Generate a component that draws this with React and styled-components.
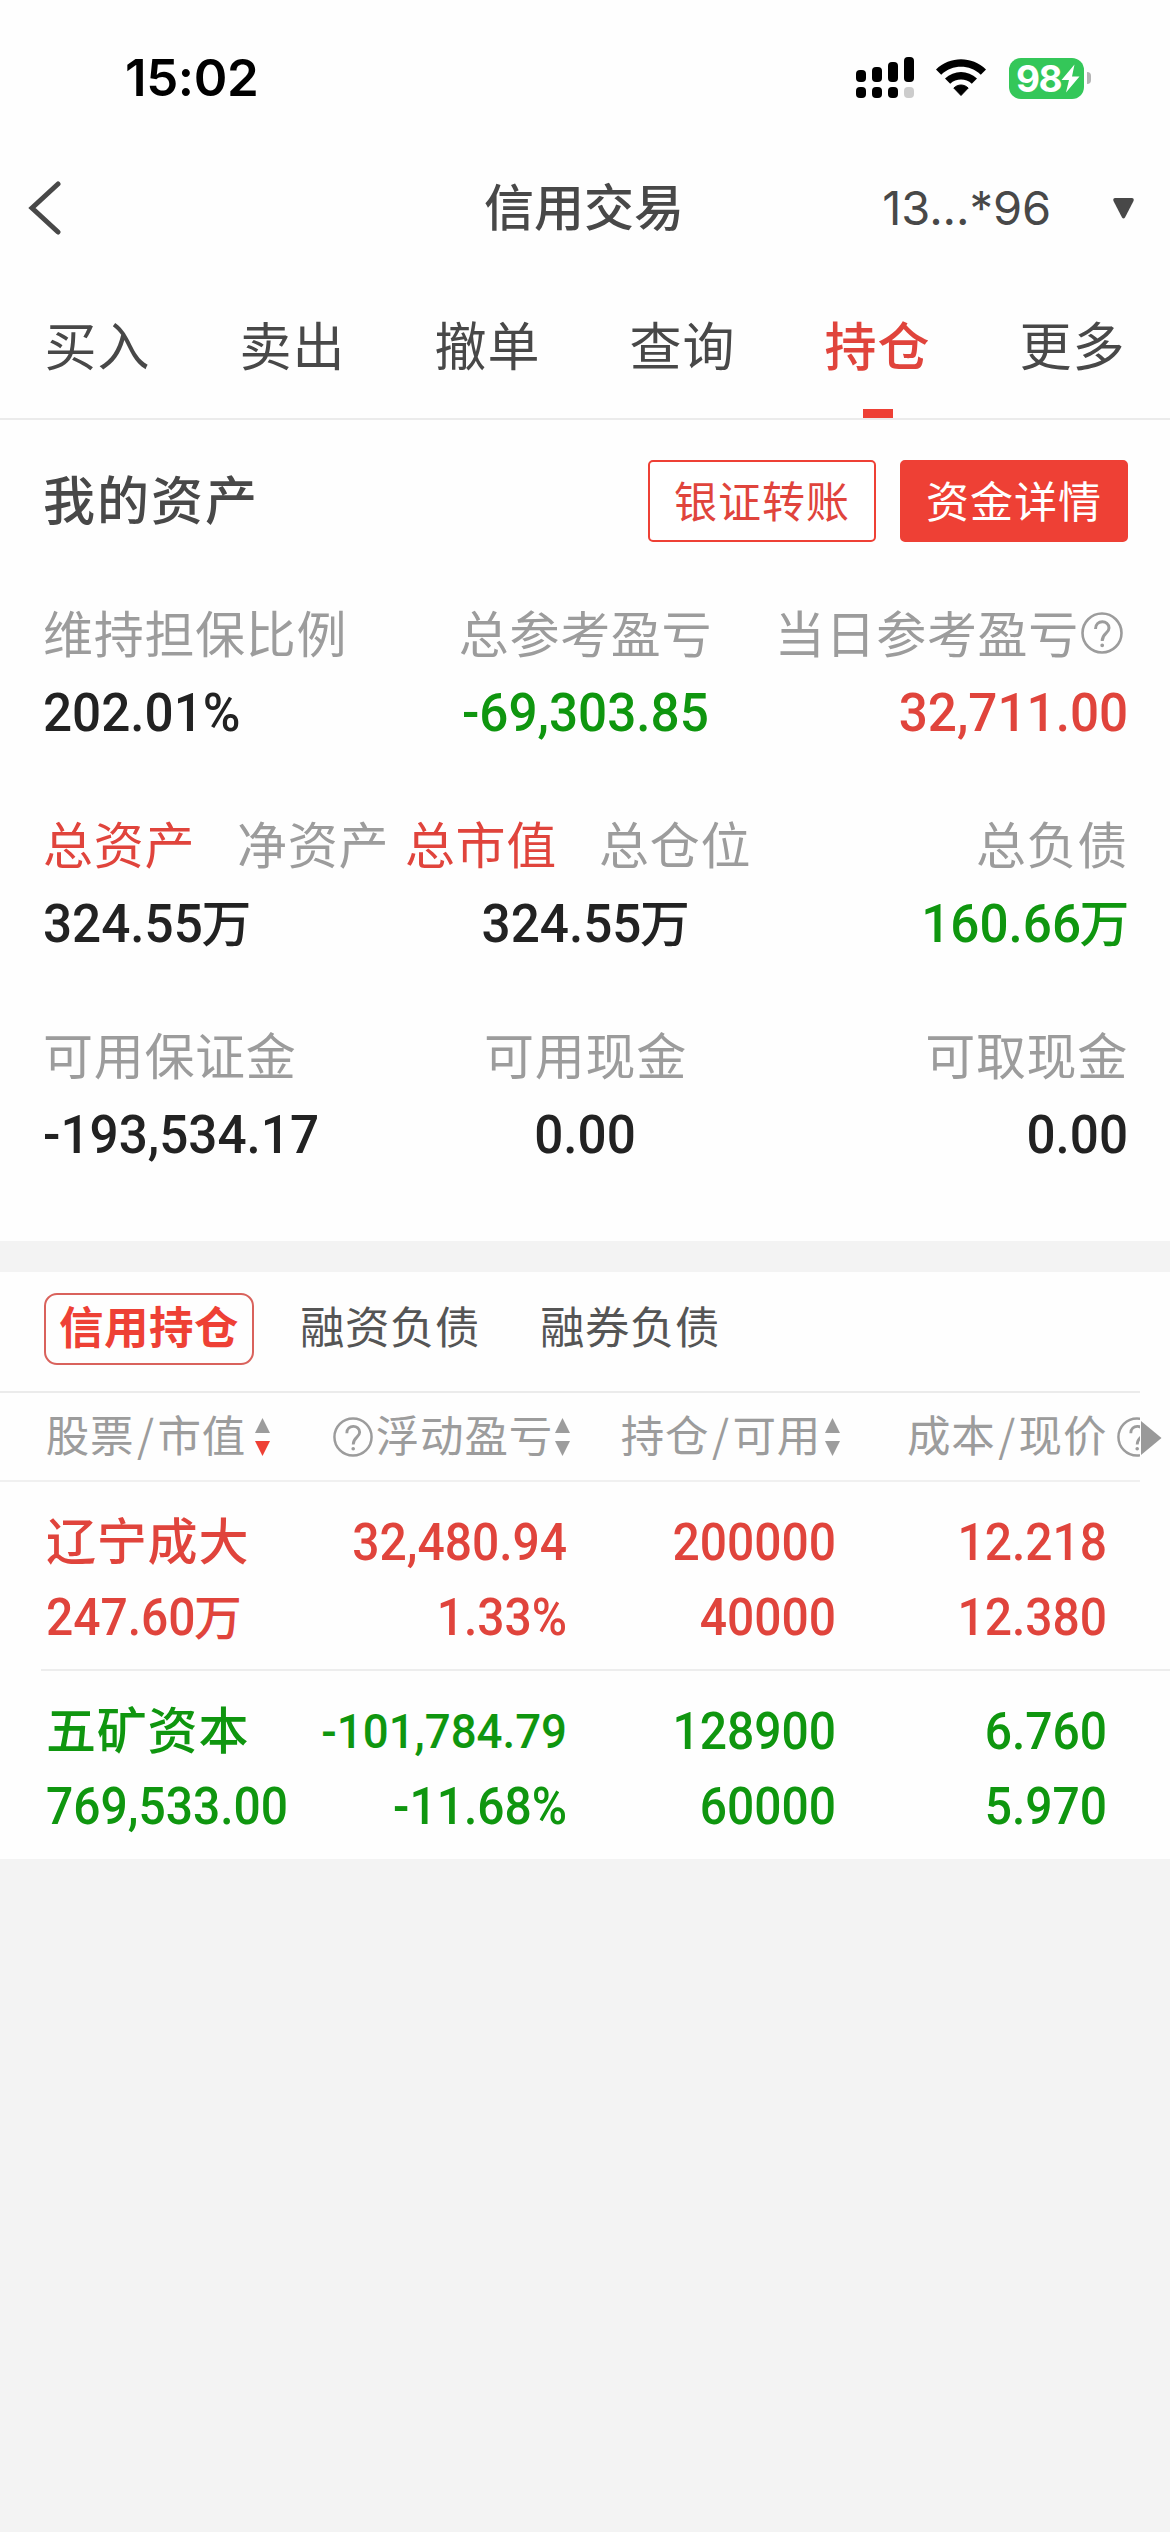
import React from "react";
import styled, { createGlobalStyle } from "styled-components";

const RED = "#ee4035";
const TEXT_RED = "#e0443c";
const GREEN = "#0f960f";
const GRAY = "#9c9c9c";
const INK = "#484848";
const BLACK = "#222222";

const toneColor = { red: TEXT_RED, green: GREEN, black: BLACK };

const GlobalStyle = createGlobalStyle`
  *, *::before, *::after { box-sizing: border-box; }
  html, body { margin: 0; padding: 0; background: #f3f3f3; }
  body {
    font-family: "Noto Sans CJK SC", sans-serif;
    color: ${INK};
    font-size: 50px;
  }
  button { font: inherit; background: none; border: 0; padding: 0; margin: 0; color: inherit; }
`;

const Screen = styled.div`
  width: 1170px;
  min-height: 2532px;
  background: #f3f3f3;
  display: flex;
  flex-direction: column;
  overflow: hidden;
`;

const StatusBar = styled.div`
  height: 156px;
  padding: 0 79px 0 125px;
  background: #fefefe;
  display: flex;
  align-items: center;
  justify-content: space-between;
`;

const Clock = styled.span`
  font: 600 51px/60px Inter, sans-serif;
  color: #000;
  letter-spacing: -0.4px;
`;

const StatusIcons = styled.div`
  display: flex;
  align-items: center;
`;

const SignalIcon = styled.svg`
  width: 58px;
  height: 42px;
  margin-right: 22px;
`;

const WifiSvg = styled.svg`
  width: 50px;
  height: 38px;
  margin-right: 23px;
`;

const Battery = styled.div`
  width: 75px;
  height: 41px;
  border-radius: 12px;
  background: #34c759;
  display: flex;
  align-items: center;
  padding-left: 7px;
  font: 700 37px/41px Inter, sans-serif;
  letter-spacing: -1.6px;
  color: #fff;
`;

const Bolt = styled.svg`
  width: 19px;
  height: 29px;
  flex: none;
`;

const BatteryTip = styled.i`
  width: 4px;
  height: 12px;
  margin-left: 3px;
  border-radius: 0 4px 4px 0;
  background: #b4b4b4;
`;

const NavBar = styled.header`
  height: 104px;
  background: #fefefe;
  padding: 0 36px 0 28px;
  display: grid;
  grid-template-columns: 456px 1fr auto 21px;
  align-items: center;
`;

const BackIcon = styled.svg`
  width: 34px;
  height: 54px;
`;

const Title = styled.h1`
  margin: 0 0 8px;
  font-size: 50px;
  font-weight: 500;
  line-height: 60px;
`;

const Account = styled.span`
  font: 400 47px/60px Inter, sans-serif;
  margin-right: 62px;
  letter-spacing: -0.1px;
`;

const Tabs = styled.nav`
  height: 160px;
  background: #fefefe;
  border-bottom: 2px solid #ebebeb;
  display: grid;
  grid-template-columns: repeat(6, 195px);
`;

const Tab = styled.button`
  display: flex;
  flex-direction: column;
  align-items: center;
  justify-content: space-between;
  padding-top: 54px;
  font-size: 52px;
  line-height: 60px;
  letter-spacing: 1px;
  font-weight: ${(p) => (p.$active ? 500 : 400)};
  color: ${(p) => (p.$active ? TEXT_RED : INK)};

  &::after {
    content: "";
    width: 30px;
    height: 9px;
    background: ${(p) => (p.$active ? RED : "transparent")};
  }
`;

const Assets = styled.section`
  background: #fefefe;
  height: 821px;
  padding: 40px 42px 0 43px;
`;

const AssetsHead = styled.div`
  height: 82px;
  display: flex;
  align-items: center;
  gap: 24px;
`;

const AssetsTitle = styled.h2`
  flex: 1;
  margin: 0 0 6px;
  font-size: 52px;
  font-weight: 500;
  line-height: 60px;
  letter-spacing: 2px;
`;

const ActionButton = styled.button`
  width: 228px;
  height: 82px;
  border-radius: 5px;
  border: 2px solid ${RED};
  background: ${(p) => (p.$filled ? RED : "#fff")};
  color: ${(p) => (p.$filled ? "#fff" : TEXT_RED)};
  font-size: 43px;
  line-height: 60px;
  letter-spacing: 1px;
  padding-bottom: 5px;
`;

const Metrics = styled.div`
  display: grid;
  grid-template-columns: 355px 1fr 355px;
  grid-auto-rows: 211px;
  padding-top: 59px;
`;

const Metric = styled.div`
  display: flex;
  flex-direction: column;
  align-items: ${(p) => p.$align};
  white-space: nowrap;
`;

const Labels = styled.div`
  display: flex;
  align-items: center;
  height: 60px;
  gap: 42px;
  padding-right: ${(p) => p.$nudge}px;
`;

const Label = styled.span`
  display: flex;
  align-items: center;
  font-size: 50px;
  line-height: 60px;
  letter-spacing: 0.7px;
  color: ${(p) => (p.$active ? TEXT_RED : GRAY)};
`;

const Figure = styled.span`
  display: block;
  font-family: Roboto, "Noto Sans CJK SC", sans-serif;
  font-weight: 500;
  font-size: ${(p) => p.$size}px;
  line-height: 60px;
  height: 60px;
  color: ${(p) => toneColor[p.$tone]};
  transform: scaleX(0.94);
  transform-origin: ${(p) => p.$origin} center;
`;

const MetricFigure = styled(Figure)`
  margin-top: 21px;
`;

const Unit = styled.span`
  display: inline-block;
  font-family: "Noto Sans CJK SC", sans-serif;
  font-size: ${(p) => p.$size}px;
  line-height: 0;
  transform: scaleX(1.06);
`;

const HelpSvg = styled.svg`
  flex: none;
  width: ${(p) => p.$size}px;
  height: ${(p) => p.$size}px;
  margin: ${(p) => p.$margin || 0};
  fill: none;
  stroke: ${GRAY};
  stroke-width: 2.6;
`;

const Holdings = styled.section`
  margin-top: 31px;
  background: #fefefe;
  height: 587px;
`;

const Segments = styled.div`
  height: 121px;
  border-bottom: 2px solid #ebebeb;
  margin-right: 30px;
  padding: 21px 0 0 44px;
  display: flex;
  align-items: flex-start;
`;

const Segment = styled.button`
  height: 72px;
  width: ${(p) => (p.$active ? 210 : 240)}px;
  border: 2px solid ${(p) => (p.$active ? "#d9625c" : "transparent")};
  border-radius: 13px;
  padding: 0 0 9px;
  font-size: 44.5px;
  line-height: 59px;
  letter-spacing: 0.5px;
  white-space: nowrap;
  font-weight: ${(p) => (p.$active ? 700 : 400)};
  color: ${(p) => (p.$active ? RED : "#555")};
  margin-left: ${(p) => p.$gap || 0}px;
`;

const TableHead = styled.div`
  height: 89px;
  display: flex;
  align-items: center;
  color: ${GRAY};
  font-size: 43.5px;
  line-height: 60px;
`;

const HeadCells = styled.div`
  width: 1140px;
  height: 89px;
  flex: none;
  overflow: hidden;
  border-bottom: 2px solid #f0f0f0;
  padding-left: 45px;
  display: grid;
  grid-template-columns: 225px 300px 270px 300px;
  align-items: center;
`;

const HeadCell = styled.div`
  display: flex;
  align-items: center;
  justify-content: ${(p) => (p.$start ? "flex-start" : "flex-end")};
  padding-left: ${(p) => (p.$start ? 67 : 0)}px;
  white-space: nowrap;
`;

const HeadText = styled.span`
  letter-spacing: 0.8px;
  margin-bottom: 5px;
`;

const Slash = styled.span`
  display: inline-block;
  width: 23px;
  text-align: center;
`;

const SortSvg = styled.svg`
  flex: none;
  width: 15px;
  height: 38px;
  margin-left: ${(p) => p.$gap}px;
`;

const MoreSvg = styled.svg`
  width: 22px;
  height: 36px;
`;

const StockRow = styled.div`
  height: 189px;
  margin-left: 41px;
  padding: 31px 63px 0 5px;
  border-bottom: ${(p) => (p.$last ? "0" : "2px solid #ededed")};
  display: grid;
  grid-template-columns: 251px 270px 269px 271px;
  grid-template-rows: 60px 60px;
  row-gap: 15px;
  white-space: nowrap;
`;

const StockName = styled.span`
  font-size: 50px;
  font-weight: 500;
  line-height: 60px;
  letter-spacing: 0.8px;
  margin-top: -5px;
  color: ${(p) => toneColor[p.$tone]};
`;

const CellFigure = styled(Figure)`
  text-align: ${(p) => p.$origin};
`;

function Help({ size, margin }) {
  return (
    <HelpSvg viewBox="0 0 42 42" $size={size} $margin={margin}>
      <circle cx="21" cy="21" r="19.5" />
      <path d="M14.5 17 C14.5 7.5 28 7.8 28 16 C28 21.5 21.2 21 21.2 29" strokeWidth="3" />
      <circle cx="21.2" cy="33.3" r="1.1" fill={GRAY} strokeWidth="1.6" />
    </HelpSvg>
  );
}

function Sort({ gap, desc }) {
  return (
    <SortSvg viewBox="0 0 15 38" $gap={gap}>
      <path d="M7.5 0 15 15H0Z" fill={GRAY} />
      <path d="M0 23H15L7.5 38Z" fill={desc ? RED : GRAY} />
    </SortSvg>
  );
}

function Amount({ value, unitSize }) {
  if (!value.endsWith("万")) return value;
  return (
    <>
      {value.slice(0, -1)}
      <Unit $size={unitSize}>万</Unit>
    </>
  );
}

const metrics = [
  { labels: ["维持担保比例"], value: "202.01%", tone: "black" },
  { labels: ["总参考盈亏"], value: "-69,303.85", tone: "green" },
  { labels: ["当日参考盈亏"], value: "32,711.00", tone: "red", help: true },
  { labels: ["总资产", "净资产"], value: "324.55万", tone: "black" },
  { labels: ["总市值", "总仓位"], value: "324.55万", tone: "black" },
  { labels: ["总负债"], value: "160.66万", tone: "green" },
  { labels: ["可用保证金"], value: "-193,534.17", tone: "black" },
  { labels: ["可用现金"], value: "0.00", tone: "black" },
  { labels: ["可取现金"], value: "0.00", tone: "black" },
];

const stocks = [
  {
    name: "辽宁成大",
    tone: "red",
    top: ["32,480.94", "200000", "12.218"],
    bottom: ["247.60万", "1.33%", "40000", "12.380"],
  },
  {
    name: "五矿资本",
    tone: "green",
    top: ["-101,784.79", "128900", "6.760"],
    bottom: ["769,533.00", "-11.68%", "60000", "5.970"],
  },
];

const tabs = ["买入", "卖出", "撤单", "查询", "持仓", "更多"];
const aligns = ["flex-start", "center", "flex-end"];
const origins = ["left", "center", "right"];

export default function App() {
  return (
    <Screen>
      <GlobalStyle />
      <StatusBar>
        <Clock>15:02</Clock>
        <StatusIcons>
          <SignalIcon viewBox="0 0 58 42">
            <rect x="0" y="13" width="10" height="12" rx="4" />
            <rect x="16" y="10" width="10" height="15" rx="4" />
            <rect x="32" y="5" width="10" height="20" rx="4" />
            <rect x="48" y="0" width="10" height="25" rx="4" />
            <rect x="0" y="30" width="10" height="11" rx="4" />
            <rect x="16" y="30" width="10" height="11" rx="4" />
            <rect x="32" y="30" width="10" height="11" rx="4" />
            <rect x="48" y="30" width="10" height="11" rx="4" fill="#ccc" />
          </SignalIcon>
          <WifiSvg viewBox="0 0 50 38">
            <path d="M0 10.5C14-3.2 36-3.2 50 10.5L44.8 15.8C33.5 5.2 16.5 5.2 5.2 15.8Z" />
            <path d="M9 19.5C18 10.8 32 10.8 41 19.5L35.8 24.7C29.8 19.2 20.2 19.2 14.2 24.7Z" />
            <path d="M17.8 29C22 25 28 25 32.2 29L25 36.5Z" strokeLinejoin="round" stroke="#000" />
          </WifiSvg>
          <Battery>
            98
            <Bolt viewBox="0 0 19 29">
              <path d="M13.5 0.5 0.5 16H8L5 28.5 18.5 12.5H11Z" fill="#fff" />
            </Bolt>
          </Battery>
          <BatteryTip />
        </StatusIcons>
      </StatusBar>

      <NavBar>
        <BackIcon viewBox="0 0 34 54" fill="none" stroke={INK} strokeWidth="5" strokeLinecap="round">
          <path d="M30 3 4 27 30 51" />
        </BackIcon>
        <Title>信用交易</Title>
        <Account>13...*96</Account>
        <svg width="21" height="21" viewBox="0 0 21 21" fill={INK}>
          <path d="M2 0H19Q21.5 0.5 20.5 3L12 19.5Q10.500 21.5 9 19.5L0.5 3Q-0.5 0.5 2 0Z" />
        </svg>
      </NavBar>

      <Tabs>
        {tabs.map((t) => (
          <Tab key={t} $active={t === "持仓"}>
            {t}
          </Tab>
        ))}
      </Tabs>

      <Assets>
        <AssetsHead>
          <AssetsTitle>我的资产</AssetsTitle>
          <ActionButton>银证转账</ActionButton>
          <ActionButton $filled>资金详情</ActionButton>
        </AssetsHead>
        <Metrics>
          {metrics.map((m, i) => (
            <Metric key={m.labels[0]} $align={aligns[i % 3]}>
              <Labels $nudge={i === 4 ? 15 : 0}>
                {m.labels.map((l, j) => (
                  <Label key={l} $active={m.labels.length > 1 && j === 0}>
                    {l}
                    {m.help && <Help size={42} margin="3px 5px 0 2px" />}
                  </Label>
                ))}
              </Labels>
              <MetricFigure $tone={m.tone} $size={54.5} $origin={origins[i % 3]}>
                <Amount value={m.value} unitSize={50} />
              </MetricFigure>
            </Metric>
          ))}
        </Metrics>
      </Assets>

      <Holdings>
        <Segments>
          <Segment $active>信用持仓</Segment>
          <Segment $gap={16}>融资负债</Segment>
          <Segment>融券负债</Segment>
        </Segments>
        <TableHead>
          <HeadCells>
            <HeadCell>
              <HeadText>
                股票<Slash>/</Slash>市值
              </HeadText>
              <Sort gap={9} desc />
            </HeadCell>
            <HeadCell>
              <Help size={40} margin="0 3px 0 0" />
              <HeadText>浮动盈亏</HeadText>
              <Sort gap={2} />
            </HeadCell>
            <HeadCell>
              <HeadText>
                持仓<Slash>/</Slash>可用
              </HeadText>
              <Sort gap={4} />
            </HeadCell>
            <HeadCell $start>
              <HeadText>
                成本<Slash>/</Slash>现价
              </HeadText>
              <Help size={40} margin="0 0 0 10px" />
            </HeadCell>
          </HeadCells>
          <MoreSvg viewBox="0 0 22 36">
            <path d="M1 1 21.5 18 1 35Z" fill="#999" />
          </MoreSvg>
        </TableHead>
        {stocks.map((s, i) => (
          <StockRow key={s.name} $last={i === stocks.length - 1}>
            <StockName $tone={s.tone}>{s.name}</StockName>
            {s.top.map((v) => (
              <CellFigure key={v} $tone={s.tone} $size={v.length > 10 ? 48.5 : 51} $origin="right">
                {v}
              </CellFigure>
            ))}
            {s.bottom.map((v, j) => (
              <CellFigure key={v} $tone={s.tone} $size={51} $origin={j === 0 ? "left" : "right"}>
                <Amount value={v} unitSize={48} />
              </CellFigure>
            ))}
          </StockRow>
        ))}
      </Holdings>
    </Screen>
  );
}
